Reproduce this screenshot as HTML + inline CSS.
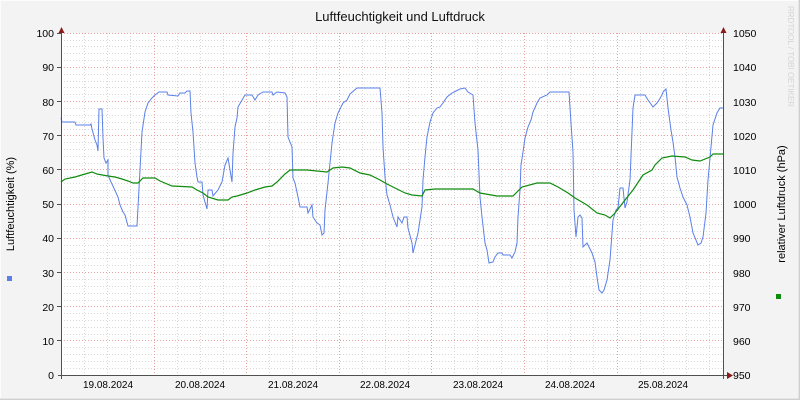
<!DOCTYPE html>
<html><head><meta charset="utf-8"><style>
html,body{margin:0;padding:0;background:#f3f3f3;}
svg{display:block;font-family:"Liberation Sans","DejaVu Sans",sans-serif;}
</style></head><body>
<svg width="800" height="400" viewBox="0 0 800 400" xmlns="http://www.w3.org/2000/svg">
<rect x="0" y="0" width="800" height="400" fill="#f3f3f3"/>
<rect x="0.5" y="0.5" width="798" height="398" fill="none" stroke="#fcfcfc"/>
<path d="M799.5 0V399.5H0" fill="none" stroke="#cfcfcf" stroke-width="2"/>
<rect x="61" y="33" width="662" height="342" fill="#ffffff"/>
<g id="grid" stroke-width="1" fill="none">
<g stroke="#d8d8d8" stroke-dasharray="1,2">
<path d="M61 368.5H723M61 361.5H723M61 354.5H723M61 347.5H723M61 334.5H723M61 327.5H723M61 320.5H723M61 313.5H723M61 300.5H723M61 293.5H723M61 286.5H723M61 279.5H723M61 265.5H723M61 258.5H723M61 252.5H723M61 245.5H723M61 231.5H723M61 224.5H723M61 217.5H723M61 211.5H723M61 197.5H723M61 190.5H723M61 183.5H723M61 176.5H723M61 163.5H723M61 156.5H723M61 149.5H723M61 142.5H723M61 129.5H723M61 122.5H723M61 115.5H723M61 108.5H723M61 94.5H723M61 87.5H723M61 81.5H723M61 74.5H723M61 60.5H723M61 53.5H723M61 46.5H723M61 40.5H723"/>
<path d="M84.5 33V375M107.5 33V375M130.5 33V375M177.5 33V375M200.5 33V375M223.5 33V375M269.5 33V375M292.5 33V375M316.5 33V375M362.5 33V375M385.5 33V375M408.5 33V375M454.5 33V375M477.5 33V375M501.5 33V375M547.5 33V375M570.5 33V375M593.5 33V375M640.5 33V375M663.5 33V375M686.5 33V375M709.5 33V375"/>
</g>
<g stroke="#e8a0a0" stroke-dasharray="1,2">
<path d="M61 340.5H723M61 306.5H723M61 272.5H723M61 238.5H723M61 204.5H723M61 169.5H723M61 135.5H723M61 101.5H723M61 67.5H723M61 33.5H723"/>
<path d="M154.5 33V375M246.5 33V375M339.5 33V375M431.5 33V375M524.5 33V375M617.5 33V375"/>
</g>
</g>
<polyline fill="none" stroke="#5a7fe8" stroke-width="1" points="61,118 62,122 75,122 76,125 90,125 91,124 92,129 95,140 97,145 98,151 99,109 102,109 103,138 104,158 106,163 108,160 108,175 111,182 112,184 118,197 120,205 123,212 125,215 128,226 137,226 138,207 140,170 142,132 145,112 148,103 152,98 155,95 159,92 167,92 168,95 178,96 180,93 185,93 187,91 190,91 191,113 193,132 195,163 197,177 198,182 202,182 203,195 207,209 208,190 212,190 213,196 218,190 222,182 225,165 228,158 230,170 232,182 233,153 235,127 237,118 238,107 242,100 245,95 252,95 255,100 258,95 263,92 272,92 273,95 277,92 285,93 287,97 288,137 292,147 293,178 295,183 298,197 300,207 307,207 308,213 312,205 313,217 317,223 320,225 322,235 324,233 325,210 328,183 332,143 335,123 338,113 343,103 347,100 350,94 357,88 380,88 382,113 383,147 385,177 387,195 390,205 393,217 397,227 398,217 402,223 404,217 407,217 408,228 412,243 413,253 415,245 418,233 422,207 423,180 425,157 427,137 430,122 433,113 437,108 440,107 443,103 447,97 452,93 460,89 465,88 468,92 473,95 475,123 478,150 480,197 482,217 485,243 487,250 489,263 493,262 495,257 498,253 502,253 503,255 510,255 512,258 515,252 517,243 518,217 520,190 521,165 523,152 525,138 528,127 531,120 533,112 537,103 540,98 547,95 550,92 569,92 571,123 573,152 574,210 576,237 578,217 580,215 582,218 583,247 587,243 592,253 595,262 597,277 599,290 602,293 604,290 607,280 610,260 613,220 616,210 618,208 620,188 623,188 625,208 627,202 630,180 633,108 635,95 645,95 648,100 653,107 657,103 659,100 662,95 663,92 666,89 668,108 671,130 673,142 675,157 677,177 680,188 683,197 687,205 690,217 693,233 698,245 701,243 703,237 706,213 708,180 711,147 713,125 717,113 720,108 723,108"/>
<polyline fill="none" stroke="#0f8c0f" stroke-width="1.2" points="61,182 65,179 75,177 85,174 92,172 97,174 108,176 115,177 122,179 128,181 133,183 138,183 143,178 155,178 160,181 172,186 192,187 197,190 203,193 208,197 218,200 228,200 232,197 237,196 247,193 255,190 265,187 272,186 277,182 285,174 290,170 307,170 327,172 333,168 342,167 350,168 360,173 370,175 380,180 387,184 395,188 405,193 412,195 422,196 425,190 435,189 473,189 480,193 497,196 513,196 522,187 537,183 550,183 558,187 568,193 575,198 587,205 597,213 605,215 610,218 615,213 625,200 633,190 643,175 652,170 655,165 662,158 672,156 685,157 692,160 700,161 710,157 713,154 723,154"/>
<g stroke="#505050" stroke-width="1" fill="none">
<path d="M61.5 30V379M58 375.5H727M723.5 30V379"/>
<path d="M57 340.5H61M57 306.5H61M57 272.5H61M57 238.5H61M57 204.5H61M57 169.5H61M57 135.5H61M57 101.5H61M57 67.5H61M57 33.5H61"/>
</g>
<path d="M58.5 33L61.5 27L64.5 33Z M720.5 33L723.5 27L726.5 33Z M727 372L733 375.5L727 379Z" fill="#8b1a1a"/>
<g font-size="10.5" fill="#000">
<text x="400" y="21" font-size="13" text-anchor="middle" fill="#111">Luftfeuchtigkeit und Luftdruck</text>
<g text-anchor="end">
<text x="54" y="379">0</text><text x="54" y="345">10</text><text x="54" y="311">20</text><text x="54" y="277">30</text><text x="54" y="242">40</text><text x="54" y="208">50</text><text x="54" y="174">60</text><text x="54" y="140">70</text><text x="54" y="106">80</text><text x="54" y="71">90</text><text x="54" y="37">100</text>
</g>
<g>
<text x="733" y="379">950</text><text x="733" y="345">960</text><text x="733" y="311">970</text><text x="733" y="277">980</text><text x="733" y="242">990</text><text x="733" y="208">1000</text><text x="733" y="174">1010</text><text x="733" y="140">1020</text><text x="733" y="106">1030</text><text x="733" y="71">1040</text><text x="733" y="37">1050</text>
</g>
<g text-anchor="middle" font-size="10">
<text x="108" y="388">19.08.2024</text><text x="200" y="388">20.08.2024</text><text x="293" y="388">21.08.2024</text><text x="385" y="388">22.08.2024</text><text x="478" y="388">23.08.2024</text><text x="570" y="388">24.08.2024</text><text x="663" y="388">25.08.2024</text>
</g>
<text transform="translate(14,204) rotate(-90)" text-anchor="middle" font-size="11">Luftfeuchtigkeit (%)</text>
<text transform="translate(785,204) rotate(-90)" text-anchor="middle" font-size="11">relativer Luftdruck (hPa)</text>
<text transform="translate(788,6) rotate(90)" font-size="8" fill="#d4d4d4">RRDTOOL / TOBI OETIKER</text>
</g>
<rect x="7" y="276" width="5" height="5" fill="#5a7fe8"/>
<rect x="776" y="294" width="5" height="5" fill="#0f8c0f"/>
</svg>
</body></html>
